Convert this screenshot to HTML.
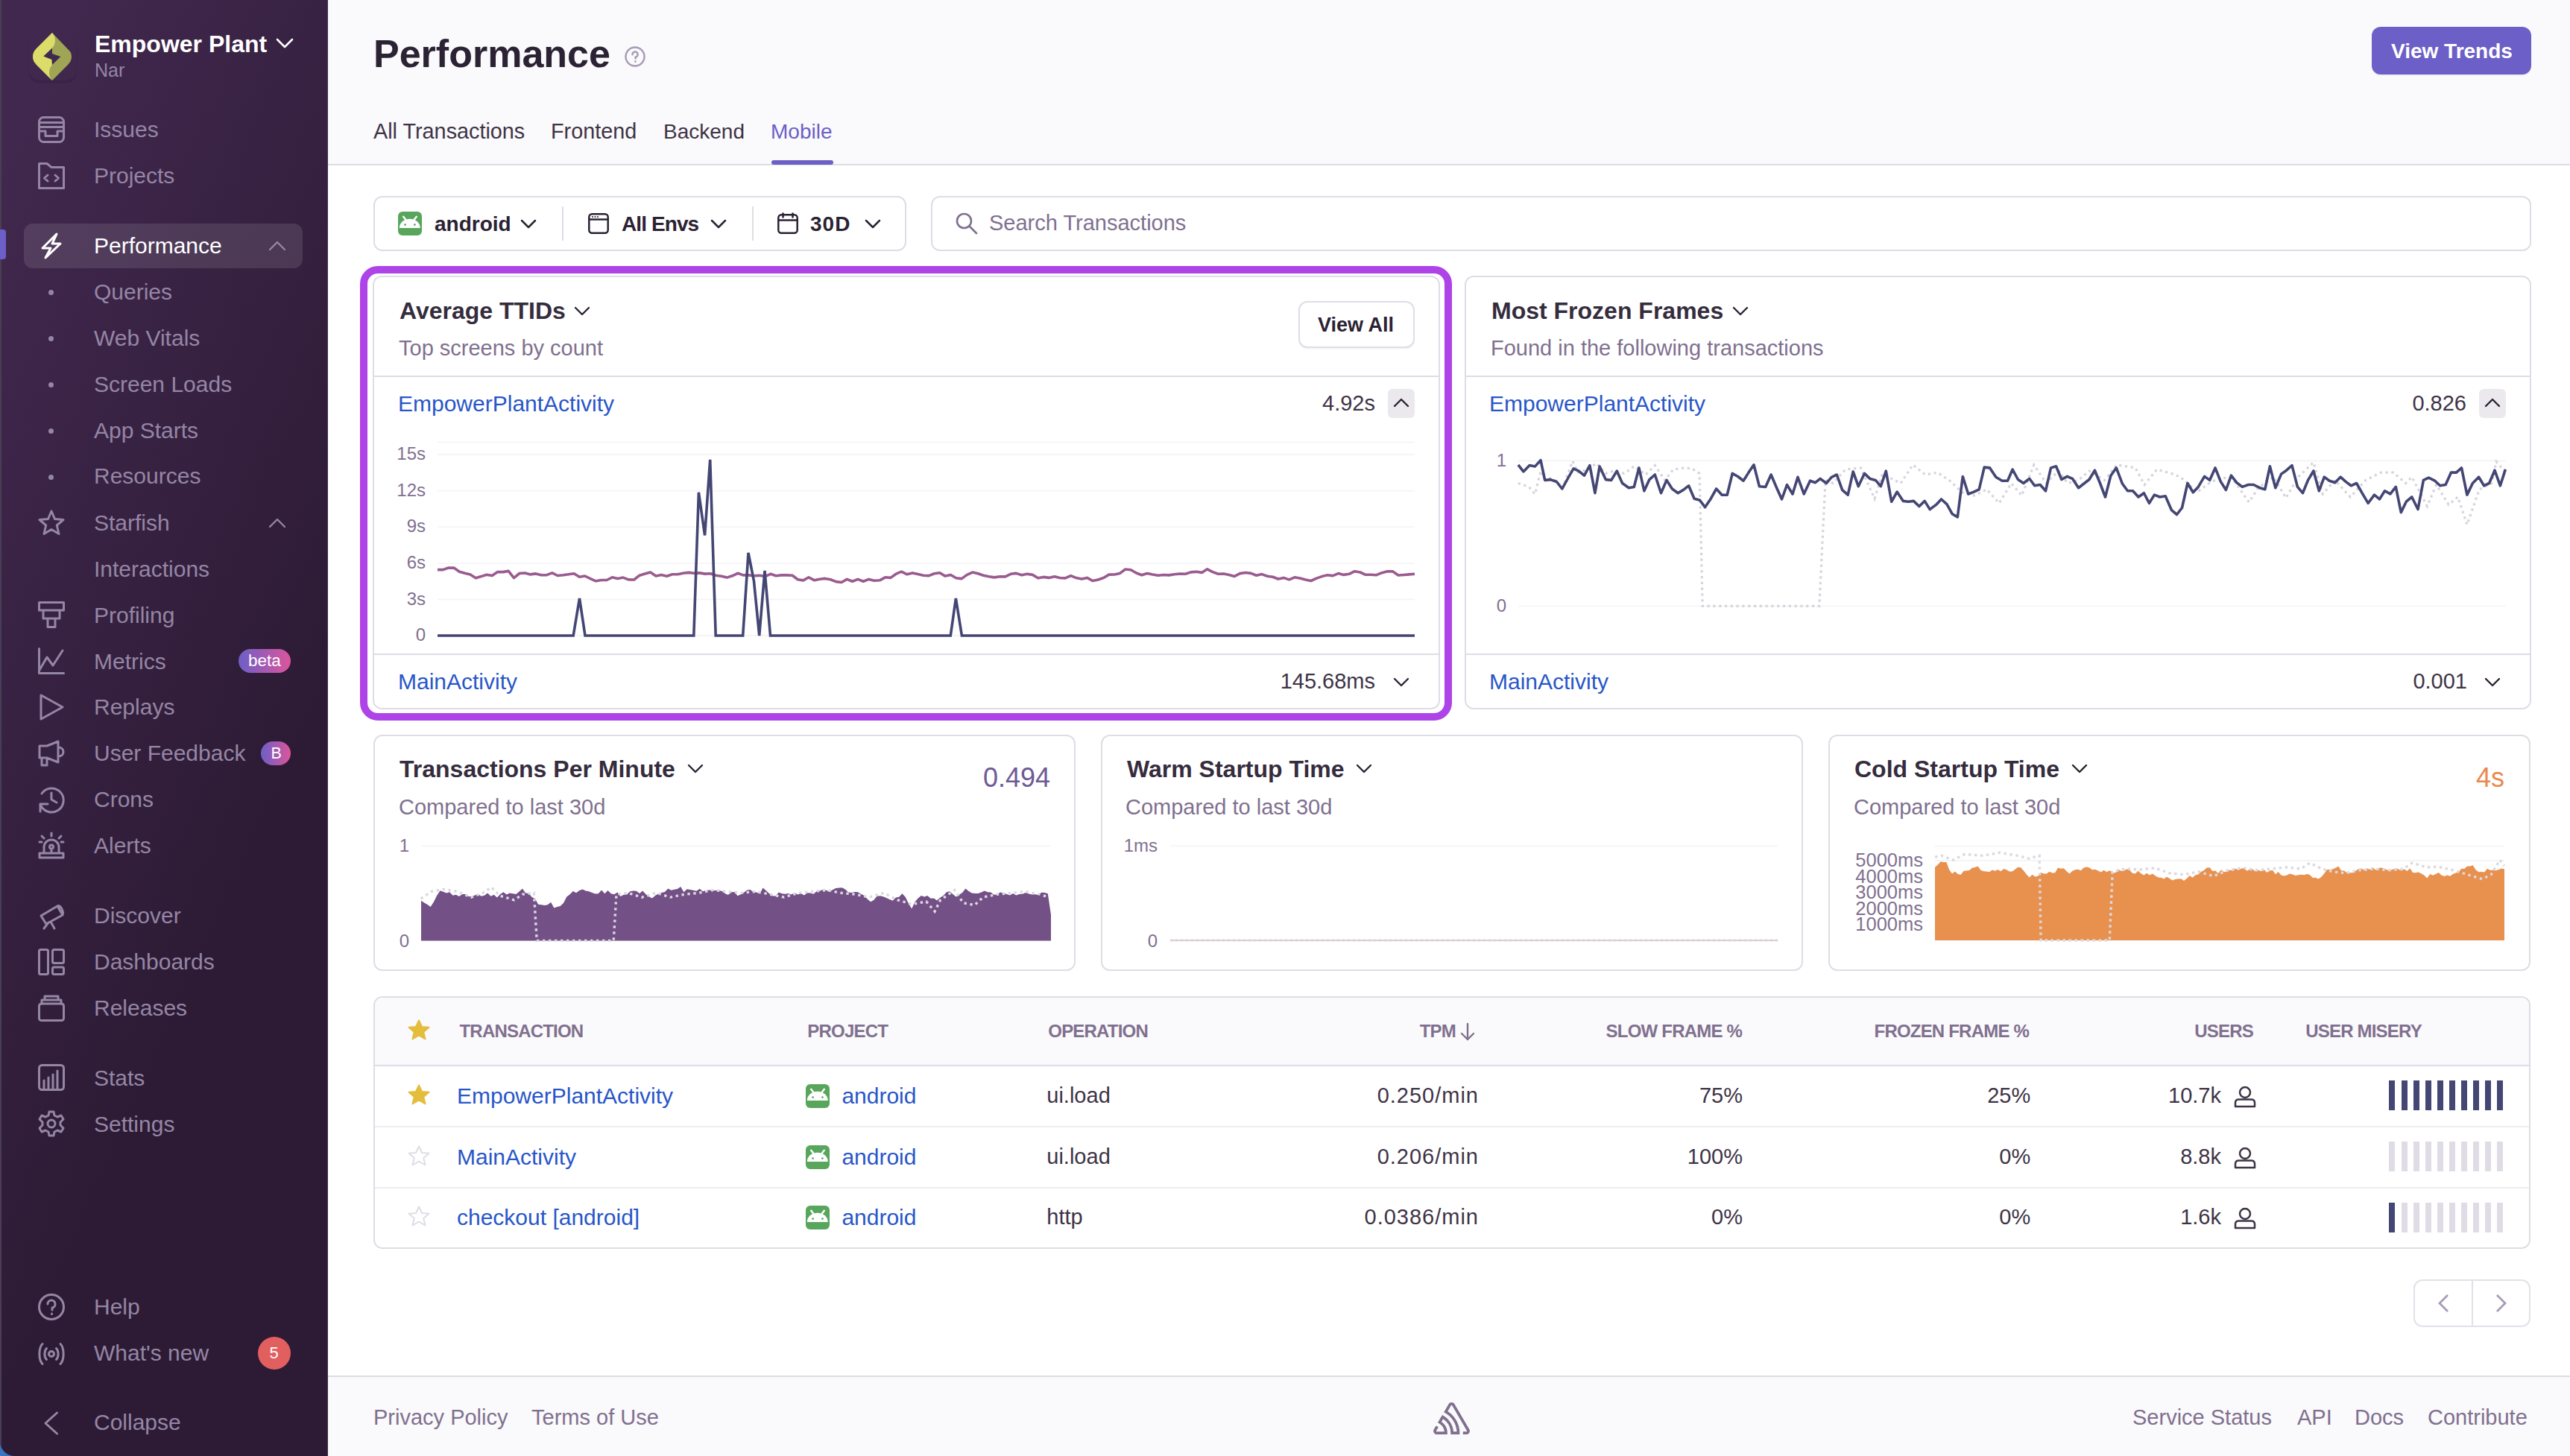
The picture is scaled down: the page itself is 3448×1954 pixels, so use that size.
<!DOCTYPE html>
<html><head><meta charset="utf-8">
<style>
*{box-sizing:border-box;margin:0;padding:0}
html,body{width:3448px;height:1954px;overflow:hidden;background:#fff;font-family:"Liberation Sans",sans-serif}
.a{position:absolute}
.t{position:absolute;line-height:1;white-space:nowrap}
#sb{position:absolute;left:0;top:0;width:440px;height:1954px;background:linear-gradient(294.17deg,#2d1b35 35.57%,#41284e 92.42%);overflow:hidden;border-bottom-left-radius:20px}
.nv{position:absolute;left:126px;font-size:30px;color:#9586a5;line-height:1;white-space:nowrap}
.ic{position:absolute;left:51px;width:36px;height:36px;overflow:visible}
.ic *{fill:none;stroke:#9586a5;stroke-width:3;stroke-linecap:round;stroke-linejoin:round}
.dot{position:absolute;left:65px;width:7px;height:7px;border-radius:50%;background:#9586a5}
@media (max-width:2000px){html{zoom:0.5}}
</style>
<style>
.card{border:2px solid #e0dce5;border-radius:12px;background:#fff}
.ttl{font-size:32px;font-weight:bold;color:#352c3d}
.sub{font-size:29px;color:#80708f}
.lnk{font-size:30px;color:#2856c9}
.tx{font-size:29px;color:#3e3446}
.yl{position:absolute;line-height:1;white-space:nowrap;font-size:24px;color:#80708f}
.th{position:absolute;line-height:1;white-space:nowrap;font-size:24px;font-weight:bold;color:#80708f;letter-spacing:-0.8px}
</style>
</head>
<body>
<div style="position:absolute;left:0;top:1924px;width:30px;height:30px;background:linear-gradient(45deg,#3f78c2,#1f4f96)"></div>
<div id="sb"><div class="a" style="left:438.5px;top:0;width:1.5px;height:1954px;background:#46375a;opacity:0.8"></div><div class="a" style="left:0;top:0;width:1.5px;height:1954px;background:#4a3d56"></div>
  <!-- org -->
  <div class="a" style="left:39px;top:42px;width:63px;height:66px;border-radius:14px;box-shadow:0 3px 2px rgba(20,10,30,0.15)"></div>
  <svg class="a" style="left:40px;top:40px" width="60" height="72" viewBox="0 0 60 72">
    <path d="M30 4 L9 25 Q4 30 4 36 Q4 42 9 47 L30 68 L51 47 Q56 42 56 36 Q56 30 51 26 Z" fill="#9fa555"/>
    <path d="M30 4 C35 9 35.5 19 30 24.6 L18.4 35.4 L29.2 39.8 L30 46.9 C25 52 24.5 62 30 68 L9 47 Q4 42 4 36 Q4 30 9 25 Z" fill="#dbdc69"/>
    <path d="M30 24.6 L18.4 35.4 L29.6 40 L30 46.9 L41.3 36 L30 32 Z" fill="#40294f"/>
  </svg>
  <div class="t" style="left:127px;top:43px;font-size:32px;font-weight:bold;color:#fff">Empower Plant</div>
  <svg class="a" style="left:370px;top:50px" width="24" height="16" viewBox="0 0 24 16"><path d="M2 3 L12 13 L22 3" fill="none" stroke="#fff" stroke-width="2.6" stroke-linecap="round" stroke-linejoin="round"/></svg>
  <div class="t" style="left:127px;top:82px;font-size:25px;color:#9586a5">Nar</div>

  <!-- Issues -->
  <svg class="ic" style="top:156px" viewBox="0 0 36 36"><rect x="1.5" y="1.5" width="33" height="33" rx="6"/><path d="M1.5 8.5H34.5M1.5 14.5H34.5M1.5 20H10V26.5H26V20H34.5"/></svg>
  <div class="nv" style="top:159px">Issues</div>
  <!-- Projects -->
  <svg class="ic" style="top:218px" viewBox="0 0 36 36"><path d="M1.5 1.5H12L18 6.5H34.5V34.5H1.5Z"/><path d="M13 17L8.5 21L13 25M23 17L27.5 21L23 25"/></svg>
  <div class="nv" style="top:221px">Projects</div>

  <!-- Performance active -->
  <div class="a" style="left:32px;top:300px;width:374px;height:60px;border-radius:12px;background:rgba(255,255,255,0.11)"></div>
  <div class="a" style="left:0;top:308px;width:8px;height:40px;border-radius:0 4px 4px 0;background:#6c5fc7"></div>
  <svg class="ic" style="top:312px" viewBox="0 0 36 36"><path style="stroke:#fff" d="M25 2L6 21H17L10 34L30 15H19Z"/></svg>
  <div class="nv" style="top:315px;color:#fff">Performance</div>
  <svg class="a" style="left:360px;top:322px" width="24" height="16" viewBox="0 0 24 16"><path d="M2 13L12 3L22 13" fill="none" stroke="#9586a5" stroke-width="2.4" stroke-linecap="round" stroke-linejoin="round"/></svg>

  <div class="dot" style="top:389px"></div><div class="nv" style="top:377px">Queries</div>
  <div class="dot" style="top:451px"></div><div class="nv" style="top:439px">Web Vitals</div>
  <div class="dot" style="top:513px"></div><div class="nv" style="top:501px">Screen Loads</div>
  <div class="dot" style="top:575px"></div><div class="nv" style="top:563px">App Starts</div>
  <div class="dot" style="top:637px"></div><div class="nv" style="top:624px">Resources</div>

  <!-- Starfish -->
  <svg class="ic" style="top:684px" viewBox="0 0 36 36"><path d="M18 2L22.5 12.5L34 13.5L25.3 21L28 32.5L18 26.5L8 32.5L10.7 21L2 13.5L13.5 12.5Z"/></svg>
  <div class="nv" style="top:687px">Starfish</div>
  <svg class="a" style="left:360px;top:694px" width="24" height="16" viewBox="0 0 24 16"><path d="M2 13L12 3L22 13" fill="none" stroke="#9586a5" stroke-width="2.4" stroke-linecap="round" stroke-linejoin="round"/></svg>
  <div class="nv" style="top:749px">Interactions</div>

  <!-- Profiling -->
  <svg class="ic" style="top:807px" viewBox="0 0 36 36"><path d="M1.5 1.5H34.5V12H1.5Z M7 12V23H29V12 M13 23V34.5H23V23"/></svg>
  <div class="nv" style="top:811px">Profiling</div>
  <!-- Metrics -->
  <svg class="ic" style="top:869px" viewBox="0 0 36 36"><path d="M1.5 1.5V34.5H34.5 M1.5 31L12 13L20 24L33 4"/></svg>
  <div class="nv" style="top:873px">Metrics</div>
  <div class="a" style="left:320px;top:871px;width:70px;height:32px;border-radius:16px;background:linear-gradient(90deg,#6c5fc7,#dc559c)"></div>
  <div class="t" style="left:333px;top:876px;font-size:22.5px;color:#fff">beta</div>
  <!-- Replays -->
  <svg class="ic" style="top:931px" viewBox="0 0 36 36"><path d="M4 2L33 18L4 34Z"/></svg>
  <div class="nv" style="top:934px">Replays</div>
  <!-- User Feedback -->
  <svg class="ic" style="top:993px" viewBox="0 0 36 36"><path d="M2 8H12L27 2V30L12 24H2Z M27 10C32 10 34 13 34 16C34 19 32 22 27 22 M5 24V34H12V24"/></svg>
  <div class="nv" style="top:996px">User Feedback</div>
  <div class="a" style="left:350px;top:995px;width:40px;height:32px;border-radius:16px;background:linear-gradient(90deg,#6c5fc7,#dc559c)"></div>
  <div class="t" style="left:363.5px;top:1000.5px;font-size:21.5px;color:#fff">B</div>
  <!-- Crons -->
  <svg class="ic" style="top:1055px" viewBox="0 0 36 36"><path d="M5 10A16 16 0 1 1 3 24 M3 34V24H13 M18 9V18L25 22"/></svg>
  <div class="nv" style="top:1058px">Crons</div>
  <!-- Alerts -->
  <svg class="ic" style="top:1117px" viewBox="0 0 36 36"><path d="M8 28V20A10 10 0 0 1 28 20V28 M2 28H34V34H2Z M18 1V5 M5 5L8 8 M31 5L28 8 M2 13H5 M31 13H34 M18 17A2.5 2.5 0 1 1 18 22 A2.5 2.5 0 1 1 18 17 M18 22V26"/></svg>
  <div class="nv" style="top:1120px">Alerts</div>

  <!-- Discover -->
  <svg class="ic" style="top:1211px" viewBox="0 0 36 36"><path d="M4 18L26 5L33 17L11 29Z M26 5C30 3 35 12 33 17 M14 27L8 35 M17 26L22 35"/></svg>
  <div class="nv" style="top:1214px">Discover</div>
  <!-- Dashboards -->
  <svg class="ic" style="top:1273px" viewBox="0 0 36 36"><rect x="1.5" y="1.5" width="12" height="33" rx="2"/><rect x="19.5" y="1.5" width="15" height="18" rx="2"/><rect x="19.5" y="25" width="15" height="9.5" rx="2"/></svg>
  <div class="nv" style="top:1276px">Dashboards</div>
  <!-- Releases -->
  <svg class="ic" style="top:1335px" viewBox="0 0 36 36"><rect x="1.5" y="12" width="33" height="22.5" rx="3"/><path d="M5 12V7H31V12 M9 7V2H27V7"/></svg>
  <div class="nv" style="top:1338px">Releases</div>

  <!-- Stats -->
  <svg class="ic" style="top:1428px" viewBox="0 0 36 36"><rect x="1.5" y="1.5" width="33" height="33" rx="4"/><path d="M8 34V22 M14 34V18 M20 34V14 M26 34V9"/></svg>
  <div class="nv" style="top:1432px">Stats</div>
  <!-- Settings -->
  <svg class="ic" style="top:1490px" viewBox="0 0 36 36"><path d="M15 2H21L22 7L26 9L31 7L34 12L30 16V20L34 24L31 29L26 27L22 29L21 34H15L14 29L10 27L5 29L2 24L6 20V16L2 12L5 7L10 9L14 7Z"/><circle cx="18" cy="18" r="5"/></svg>
  <div class="nv" style="top:1494px">Settings</div>

  <!-- Help -->
  <svg class="ic" style="top:1736px" viewBox="0 0 36 36"><circle cx="18" cy="18" r="16.5"/><path d="M13 14A5 5 0 1 1 19 19V22 M18.5 27V27.5"/></svg>
  <div class="nv" style="top:1739px">Help</div>
  <!-- What's new -->
  <svg class="ic" style="top:1799px" viewBox="0 0 36 36"><circle cx="18" cy="18" r="3.5"/><path d="M11.5 10.5C8 14 8 22 11.5 25.5 M24.5 10.5C28 14 28 22 24.5 25.5 M6 4.5C0.5 10 0.5 26 6 31.5 M30 4.5C35.5 10 35.5 26 30 31.5"/></svg>
  <div class="nv" style="top:1801px">What's new</div>
  <div class="a" style="left:346px;top:1794px;width:44px;height:44px;border-radius:50%;background:#e1605f"></div>
  <div class="t" style="left:361.5px;top:1804.5px;font-size:22px;color:#fff">5</div>
  <!-- Collapse -->
  <svg class="ic" style="top:1892px" viewBox="0 0 36 36"><path d="M25.5 4L10 18L25.5 32"/></svg>
  <div class="nv" style="top:1894px">Collapse</div>
</div>


<!-- HEADER -->
<div class="a" style="left:440px;top:0;width:3008px;height:222px;background:#faf9fb;border-bottom:2px solid #e0dce5"></div>
<div class="t" style="left:501px;top:46px;font-size:52px;font-weight:bold;color:#2b2233">Performance</div>
<svg class="a" style="left:838px;top:62px" width="28" height="28" viewBox="0 0 28 28"><circle cx="14" cy="14" r="12.5" fill="none" stroke="#a89bb6" stroke-width="2.4"/><path d="M10.5 11.2A3.6 3.6 0 1 1 14.6 14.6V16.6" fill="none" stroke="#a89bb6" stroke-width="2.4" stroke-linecap="round"/><circle cx="14.4" cy="20.6" r="1.4" fill="#a89bb6"/></svg>
<div class="a" style="left:3182px;top:36px;width:214px;height:64px;border-radius:12px;background:#6c5fc7;box-shadow:0 2px 0 rgba(0,0,0,0.04)"></div>
<div class="t" style="left:3208px;top:55px;font-size:28px;font-weight:bold;color:#fff">View Trends</div>

<div class="t" style="left:501px;top:162px;font-size:28.8px;color:#3e3446">All Transactions</div>
<div class="t" style="left:739px;top:162px;font-size:28.8px;color:#3e3446">Frontend</div>
<div class="t" style="left:890px;top:163px;font-size:28px;color:#3e3446">Backend</div>
<div class="t" style="left:1034px;top:163px;font-size:28px;color:#6c5fc7">Mobile</div>
<div class="a" style="left:1035px;top:215px;width:83px;height:6px;border-radius:3px;background:#6c5fc7"></div>

<!-- FILTER BAR -->
<div class="a" style="left:501px;top:263px;width:715px;height:74px;border:2px solid #e0dce5;border-radius:12px;background:#fff"></div>
<svg class="a" style="left:534px;top:284px" width="32" height="32" viewBox="0 0 32 32"><rect width="32" height="32" rx="6" fill="#58a65c"/><path d="M1.8 22 A14 12.2 0 0 1 29.8 22 Z" fill="#fff"/><path d="M7.2 6.8L11.2 12M24.8 6.8L20.8 12" stroke="#fff" stroke-width="2.4" stroke-linecap="round"/><circle cx="9.6" cy="17.6" r="1.4" fill="#58a65c"/><circle cx="22.4" cy="17.6" r="1.4" fill="#58a65c"/></svg>
<div class="t" style="left:583px;top:287px;font-size:28px;font-weight:bold;color:#2b2233">android</div>
<svg class="a" style="left:698px;top:293px" width="22" height="14" viewBox="0 0 22 14"><path d="M2 3L11 12L20 3" fill="none" stroke="#2b2233" stroke-width="2.5" stroke-linecap="round" stroke-linejoin="round"/></svg>
<div class="a" style="left:754px;top:277px;width:2px;height:46px;background:#e0dce5"></div>
<svg class="a" style="left:789px;top:286px" width="28" height="28" viewBox="0 0 28 28"><rect x="1.3" y="1.3" width="25.4" height="25.4" rx="4" fill="none" stroke="#2b2233" stroke-width="2.5"/><path d="M1.3 8.5H26.7" stroke="#2b2233" stroke-width="2.5"/><circle cx="6" cy="5" r="1.1" fill="#2b2233"/><circle cx="9.5" cy="5" r="1.1" fill="#2b2233"/><circle cx="13" cy="5" r="1.1" fill="#2b2233"/></svg>
<div class="t" style="left:834px;top:287px;font-size:28px;font-weight:bold;color:#2b2233;letter-spacing:-0.9px">All Envs</div>
<svg class="a" style="left:953px;top:293px" width="22" height="14" viewBox="0 0 22 14"><path d="M2 3L11 12L20 3" fill="none" stroke="#2b2233" stroke-width="2.5" stroke-linecap="round" stroke-linejoin="round"/></svg>
<div class="a" style="left:1009px;top:277px;width:2px;height:46px;background:#e0dce5"></div>
<svg class="a" style="left:1043px;top:284px" width="28" height="30" viewBox="0 0 28 30"><rect x="1.3" y="4.3" width="25.4" height="24.4" rx="4" fill="none" stroke="#2b2233" stroke-width="2.5"/><path d="M1.3 11.5H26.7M7.5 2.5V7.5M20.5 2.5V7.5" stroke="#2b2233" stroke-width="2.5" stroke-linecap="round"/></svg>
<div class="t" style="left:1087px;top:287px;font-size:28px;font-weight:bold;color:#2b2233;letter-spacing:1px">30D</div>
<svg class="a" style="left:1160px;top:293px" width="22" height="14" viewBox="0 0 22 14"><path d="M2 3L11 12L20 3" fill="none" stroke="#2b2233" stroke-width="2.5" stroke-linecap="round" stroke-linejoin="round"/></svg>

<!-- SEARCH -->
<div class="a" style="left:1249px;top:263px;width:2147px;height:74px;border:2px solid #e0dce5;border-radius:12px;background:#fff"></div>
<svg class="a" style="left:1282px;top:285px" width="30" height="30" viewBox="0 0 30 30"><circle cx="11.5" cy="11.5" r="9.5" fill="none" stroke="#80708f" stroke-width="2.6"/><path d="M18.5 18.5L28 28" stroke="#80708f" stroke-width="2.6" stroke-linecap="round"/></svg>
<div class="t" style="left:1327px;top:285px;font-size:29px;color:#80708f">Search Transactions</div>

<!-- HIGHLIGHT -->
<div class="a" style="left:483px;top:357px;width:1465px;height:610px;border:10px solid #ae43e8;border-radius:24px"></div>

<!-- TTID CARD -->
<div class="a card" style="left:500px;top:370px;width:1432px;height:582px"></div>
<div class="t ttl" style="left:536px;top:401px">Average TTIDs</div>
<svg class="a" style="left:770px;top:410px" width="22" height="14" viewBox="0 0 22 14"><path d="M2 3L11 12L20 3" fill="none" stroke="#2b2233" stroke-width="2.4" stroke-linecap="round" stroke-linejoin="round"/></svg>
<div class="t sub" style="left:535px;top:453px">Top screens by count</div>
<div class="a" style="left:1742px;top:404px;width:156px;height:63px;border:2px solid #e0dce5;border-radius:12px;background:#fff;box-shadow:0 2px 0 rgba(43,34,51,0.04)"></div>
<div class="t" style="left:1768px;top:423px;font-size:27px;font-weight:bold;color:#2b2233">View All</div>
<div class="a" style="left:500px;top:504px;width:1432px;height:2px;background:#e0dce5"></div>
<div class="t lnk" style="left:534px;top:527px">EmpowerPlantActivity</div>
<div class="t tx" style="right:1603px;top:527px">4.92s</div>
<div class="a" style="left:1862px;top:522px;width:36px;height:39px;border-radius:6px;background:#ebe9ee"></div>
<svg class="a" style="left:1869px;top:534px" width="22" height="14" viewBox="0 0 22 14"><path d="M2 11L11 2L20 11" fill="none" stroke="#2b2233" stroke-width="2.4" stroke-linecap="round" stroke-linejoin="round"/></svg>
<div class="yl" style="right:2877px;top:840.2px">0</div>
<div class="yl" style="right:2877px;top:791.6px">3s</div>
<div class="yl" style="right:2877px;top:743.0px">6s</div>
<div class="yl" style="right:2877px;top:694.4px">9s</div>
<div class="yl" style="right:2877px;top:645.8px">12s</div>
<div class="yl" style="right:2877px;top:597.2px">15s</div>
<svg class="a" style="left:560px;top:580px" width="1360" height="290" viewBox="560 580 1360 290"><path d="M587.0 593.4 H1898.0" stroke="#f5f4f7" stroke-width="1.8" fill="none"/><path d="M587.0 853.0 H1898.0" stroke="#f5f4f7" stroke-width="1.8" fill="none"/><path d="M587.0 804.4 H1898.0" stroke="#f5f4f7" stroke-width="1.8" fill="none"/><path d="M587.0 755.8 H1898.0" stroke="#f5f4f7" stroke-width="1.8" fill="none"/><path d="M587.0 707.2 H1898.0" stroke="#f5f4f7" stroke-width="1.8" fill="none"/><path d="M587.0 658.6 H1898.0" stroke="#f5f4f7" stroke-width="1.8" fill="none"/><path d="M587.0 610.0 H1898.0" stroke="#f5f4f7" stroke-width="1.8" fill="none"/><path d="M587.0 764.6 L594.3 764.6 L601.6 762.0 L609.0 762.1 L616.3 767.2 L623.6 769.3 L630.9 770.9 L638.3 775.7 L645.6 773.6 L652.9 771.2 L660.2 772.6 L667.6 767.6 L674.9 767.6 L682.2 766.4 L689.5 775.6 L696.9 769.5 L704.2 769.0 L711.5 770.9 L718.8 769.9 L726.2 771.7 L733.5 771.7 L740.8 768.8 L748.1 772.5 L755.5 771.8 L762.8 770.7 L770.1 769.8 L777.4 774.3 L784.7 773.0 L792.1 776.6 L799.4 779.8 L806.7 778.5 L814.0 778.5 L821.4 774.8 L828.7 776.5 L836.0 775.1 L843.3 777.9 L850.7 778.0 L858.0 772.2 L865.3 770.0 L872.6 768.0 L880.0 772.9 L887.3 771.4 L894.6 773.2 L901.9 770.7 L909.3 770.8 L916.6 769.3 L923.9 768.4 L931.2 769.2 L938.6 768.9 L945.9 770.1 L953.2 769.7 L960.5 772.2 L967.8 773.2 L975.2 775.1 L982.5 772.8 L989.8 769.3 L997.1 771.9 L1004.5 771.9 L1011.8 772.8 L1019.1 772.3 L1026.4 773.6 L1033.8 770.3 L1041.1 772.7 L1048.4 771.9 L1055.7 771.9 L1063.1 772.2 L1070.4 777.7 L1077.7 778.9 L1085.0 774.8 L1092.4 778.7 L1099.7 777.2 L1107.0 776.4 L1114.3 777.7 L1121.7 780.6 L1129.0 781.5 L1136.3 777.4 L1143.6 780.2 L1150.9 777.4 L1158.3 780.2 L1165.6 777.4 L1172.9 779.2 L1180.2 778.8 L1187.6 774.8 L1194.9 775.4 L1202.2 770.2 L1209.5 767.2 L1216.9 770.8 L1224.2 768.9 L1231.5 770.6 L1238.8 772.2 L1246.2 772.6 L1253.5 769.8 L1260.8 768.7 L1268.1 773.1 L1275.5 771.5 L1282.8 775.8 L1290.1 776.6 L1297.4 771.4 L1304.8 768.1 L1312.1 769.7 L1319.4 772.2 L1326.7 773.7 L1334.1 774.9 L1341.4 773.8 L1348.7 773.9 L1356.0 770.3 L1363.3 769.4 L1370.7 771.7 L1378.0 770.2 L1385.3 771.4 L1392.6 775.7 L1400.0 774.4 L1407.3 775.4 L1414.6 773.7 L1421.9 775.5 L1429.3 775.9 L1436.6 772.7 L1443.9 775.6 L1451.2 777.0 L1458.6 775.4 L1465.9 779.5 L1473.2 778.0 L1480.5 775.5 L1487.9 771.1 L1495.2 771.0 L1502.5 769.4 L1509.8 764.0 L1517.2 764.7 L1524.5 769.0 L1531.8 771.8 L1539.1 769.5 L1546.4 771.0 L1553.8 772.3 L1561.1 771.5 L1568.4 771.9 L1575.7 770.7 L1583.1 770.0 L1590.4 770.3 L1597.7 767.9 L1605.0 767.3 L1612.4 768.4 L1619.7 763.8 L1627.0 767.6 L1634.3 770.3 L1641.7 770.0 L1649.0 771.4 L1656.3 773.4 L1663.6 769.6 L1671.0 768.5 L1678.3 769.4 L1685.6 772.2 L1692.9 770.6 L1700.3 773.2 L1707.6 774.2 L1714.9 777.0 L1722.2 775.4 L1729.5 777.9 L1736.9 774.8 L1744.2 776.0 L1751.5 778.0 L1758.8 779.5 L1766.2 776.1 L1773.5 773.6 L1780.8 771.8 L1788.1 772.6 L1795.5 769.6 L1802.8 771.4 L1810.1 770.3 L1817.4 766.7 L1824.8 768.0 L1832.1 771.3 L1839.4 771.2 L1846.7 771.7 L1854.1 768.7 L1861.4 766.8 L1868.7 766.9 L1876.0 772.0 L1883.4 771.5 L1890.7 770.9 L1898.0 770.3" stroke="#9a5b8f" stroke-width="3.6" fill="none" stroke-linejoin="round"/><path d="M587.0 853.0 L769.2 853.0 L777.5 803.0 L785.0 853.0 L930.8 853.0 L937.4 660.7 L945.6 718.4 L952.7 616.8 L960.2 853.0 L996.7 853.0 L1004.0 741.8 L1011.5 780.0 L1018.7 853.0 L1026.0 766.0 L1033.5 853.0 L1275.3 853.0 L1282.4 803.0 L1290.4 853.0 L1898.0 853.0" stroke="#444674" stroke-width="3.6" fill="none" stroke-linejoin="miter"/></svg>
<div class="a" style="left:500px;top:877px;width:1432px;height:2px;background:#e0dce5"></div>
<div class="t lnk" style="left:534px;top:900px">MainActivity</div>
<div class="t tx" style="right:1603px;top:900px">145.68ms</div>
<svg class="a" style="left:1869px;top:908px" width="22" height="14" viewBox="0 0 22 14"><path d="M2 3L11 12L20 3" fill="none" stroke="#2b2233" stroke-width="2.4" stroke-linecap="round" stroke-linejoin="round"/></svg>

<!-- FROZEN CARD -->
<div class="a card" style="left:1965px;top:370px;width:1431px;height:582px"></div>
<div class="t ttl" style="left:2001px;top:401px">Most Frozen Frames</div>
<svg class="a" style="left:2324px;top:410px" width="22" height="14" viewBox="0 0 22 14"><path d="M2 3L11 12L20 3" fill="none" stroke="#2b2233" stroke-width="2.4" stroke-linecap="round" stroke-linejoin="round"/></svg>
<div class="t sub" style="left:2000px;top:453px">Found in the following transactions</div>
<div class="a" style="left:1965px;top:504px;width:1431px;height:2px;background:#e0dce5"></div>
<div class="t lnk" style="left:1998px;top:527px">EmpowerPlantActivity</div>
<div class="t tx" style="right:139px;top:527px">0.826</div>
<div class="a" style="left:3326px;top:522px;width:36px;height:39px;border-radius:6px;background:#ebe9ee"></div>
<svg class="a" style="left:3333px;top:534px" width="22" height="14" viewBox="0 0 22 14"><path d="M2 11L11 2L20 11" fill="none" stroke="#2b2233" stroke-width="2.4" stroke-linecap="round" stroke-linejoin="round"/></svg>
<div class="yl" style="right:1427px;top:605.7px">1</div>
<div class="yl" style="right:1427px;top:800.6px">0</div>
<svg class="a" style="left:2020px;top:590px" width="1360" height="240" viewBox="2020 590 1360 240"><path d="M2037.0 618.5 H3362.0" stroke="#f5f4f7" stroke-width="1.8" fill="none"/><path d="M2037.0 813.4 H3362.0" stroke="#f5f4f7" stroke-width="1.8" fill="none"/><path d="M2036.9 648.5 L2051.3 653.5 L2059.5 663.0 L2067.0 632.1 L2072.7 643.6 L2082.2 641.1 L2096.6 654.7 L2109.8 618.9 L2117.2 634.1 L2129.6 630.0 L2142.0 621.7 L2154.3 635.4 L2164.6 632.1 L2179.1 635.4 L2192.3 625.9 L2207.9 637.0 L2220.3 624.6 L2233.5 644.4 L2245.0 630.0 L2259.5 627.9 L2269.8 628.8 L2280.1 635.4 L2284.2 813.4 L2440.8 813.4 L2449.1 644.4 L2459.4 648.5 L2475.9 630.0 L2496.5 627.9 L2515.0 669.2 L2525.3 636.2 L2550.1 648.5 L2566.5 623.8 L2583.0 637.0 L2599.5 634.1 L2616.0 645.2 L2632.5 660.9 L2649.0 665.0 L2665.5 656.8 L2682.0 675.3 L2698.5 648.5 L2712.4 665.0 L2728.8 623.8 L2745.3 648.5 L2761.8 632.0 L2774.2 648.5 L2788.6 644.4 L2803.0 632.0 L2823.6 644.4 L2840.1 623.8 L2864.8 627.9 L2877.2 650.5 L2893.7 629.9 L2918.4 636.9 L2930.8 644.4 L2947.3 660.8 L2963.8 648.5 L2980.2 640.2 L2996.7 644.4 L3017.3 674.0 L3029.7 654.7 L3050.3 640.2 L3066.8 668.3 L3083.3 640.2 L3103.9 620.5 L3116.2 662.9 L3132.7 644.4 L3153.3 667.0 L3173.9 644.4 L3194.5 634.1 L3211.0 634.1 L3227.5 648.5 L3235.8 640.2 L3256.4 679.4 L3268.7 650.5 L3285.2 677.3 L3297.6 667.0 L3309.9 704.1 L3326.4 656.7 L3342.9 648.5 L3349.1 619.6 L3361.4 634.1" stroke="#d7d3dc" stroke-width="3.2" stroke-dasharray="3.2 4.6" fill="none"/><path d="M2036.9 623.8 L2043.9 632.9 L2052.1 624.6 L2059.5 625.9 L2067.0 617.6 L2072.7 644.4 L2080.1 643.6 L2088.4 646.5 L2095.8 656.0 L2104.9 639.5 L2111.1 628.8 L2118.1 632.1 L2125.5 638.2 L2132.9 624.6 L2139.9 661.7 L2146.1 625.9 L2154.3 643.6 L2161.8 644.4 L2169.2 632.1 L2176.6 648.5 L2185.3 654.7 L2192.3 653.5 L2198.9 627.9 L2205.9 658.8 L2212.9 643.6 L2220.3 637.0 L2228.5 661.7 L2236.0 644.4 L2243.4 656.0 L2251.2 661.7 L2258.2 657.6 L2265.6 651.8 L2273.1 669.2 L2280.5 671.2 L2287.5 680.7 L2295.3 669.2 L2302.7 656.0 L2310.2 664.2 L2317.2 664.2 L2324.2 635.4 L2331.6 639.5 L2339.0 645.2 L2346.0 634.1 L2353.0 623.8 L2360.4 652.7 L2368.7 653.5 L2376.1 637.0 L2383.1 653.5 L2390.5 670.0 L2397.5 650.6 L2405.0 663.0 L2412.0 640.3 L2420.2 663.0 L2428.5 645.2 L2435.5 647.7 L2442.1 642.4 L2450.3 648.5 L2457.3 640.3 L2464.3 637.0 L2471.7 657.6 L2479.2 664.2 L2486.2 632.9 L2493.2 652.7 L2501.4 635.4 L2508.8 642.4 L2516.3 644.4 L2523.3 652.7 L2530.3 632.1 L2537.7 673.3 L2545.1 660.1 L2553.4 672.4 L2560.4 673.3 L2567.4 672.4 L2574.8 679.5 L2582.2 672.4 L2589.2 683.6 L2597.5 677.4 L2604.5 670.0 L2611.9 676.6 L2619.3 689.8 L2626.3 693.9 L2633.3 639.5 L2640.7 663.0 L2648.2 660.1 L2655.2 656.8 L2662.2 627.1 L2669.6 627.9 L2677.8 640.3 L2686.1 645.2 L2693.5 645.2 L2700.1 630.0 L2707.4 643.5 L2714.8 648.5 L2722.7 642.3 L2729.7 651.8 L2737.1 650.5 L2744.5 658.8 L2751.5 627.9 L2758.5 625.8 L2765.9 643.5 L2773.4 639.4 L2780.4 642.3 L2788.6 654.7 L2795.6 649.3 L2803.0 643.5 L2810.4 631.2 L2817.5 648.5 L2824.5 667.0 L2831.9 638.2 L2839.3 627.9 L2847.5 649.3 L2854.5 658.8 L2861.5 658.8 L2869.0 667.0 L2876.4 661.7 L2883.4 675.3 L2890.4 664.1 L2897.8 667.0 L2905.2 665.8 L2913.5 684.7 L2920.5 690.5 L2927.5 681.5 L2934.9 648.5 L2942.3 660.8 L2949.3 653.4 L2957.6 639.4 L2964.6 644.4 L2972.0 627.9 L2979.4 646.4 L2986.4 657.5 L2993.4 638.2 L3000.8 647.7 L3008.3 653.4 L3016.5 650.5 L3023.5 650.5 L3031.8 654.7 L3038.8 656.7 L3045.4 625.8 L3052.8 654.7 L3060.6 636.1 L3067.6 631.2 L3075.0 624.6 L3082.4 653.4 L3089.4 661.7 L3096.5 644.4 L3103.9 632.0 L3111.3 658.8 L3118.3 640.2 L3125.3 645.2 L3132.7 647.7 L3140.1 640.2 L3147.1 646.4 L3154.2 651.8 L3161.6 648.5 L3169.8 662.9 L3177.2 675.3 L3185.5 664.1 L3192.5 669.9 L3199.5 658.8 L3206.9 662.9 L3214.3 653.4 L3221.3 687.6 L3228.3 673.2 L3235.8 667.0 L3244.0 683.5 L3251.4 644.4 L3258.4 641.1 L3266.7 645.2 L3273.7 651.8 L3281.1 650.5 L3288.5 634.1 L3295.5 634.1 L3302.5 627.9 L3309.9 664.1 L3317.4 648.5 L3325.6 640.2 L3332.6 651.8 L3339.6 648.5 L3347.0 631.2 L3354.4 651.8 L3361.4 629.9" stroke="#444674" stroke-width="3.6" fill="none" stroke-linejoin="round"/></svg>
<div class="a" style="left:1965px;top:877px;width:1431px;height:2px;background:#e0dce5"></div>
<div class="t lnk" style="left:1998px;top:900px">MainActivity</div>
<div class="t tx" style="right:138px;top:900px">0.001</div>
<svg class="a" style="left:3333px;top:908px" width="22" height="14" viewBox="0 0 22 14"><path d="M2 3L11 12L20 3" fill="none" stroke="#2b2233" stroke-width="2.4" stroke-linecap="round" stroke-linejoin="round"/></svg>

<!-- ROW 2 CARDS -->
<div class="a card" style="left:501px;top:986px;width:942px;height:317px"></div>
<div class="t ttl" style="left:536px;top:1016px">Transactions Per Minute</div>
<svg class="a" style="left:922px;top:1024px" width="22" height="14" viewBox="0 0 22 14"><path d="M2 3L11 12L20 3" fill="none" stroke="#2b2233" stroke-width="2.4" stroke-linecap="round" stroke-linejoin="round"/></svg>
<div class="t sub" style="left:535px;top:1069px">Compared to last 30d</div>
<div class="t" style="right:2039px;top:1026px;font-size:36px;color:#6e5a96;line-height:1">0.494</div>
<div class="yl" style="right:2899px;top:1122.7px">1</div>
<div class="yl" style="right:2899px;top:1250.7px">0</div>
<svg class="a" style="left:555px;top:1125px" width="865" height="147" viewBox="555 1125 865 147"><path d="M565.0 1135.4 H1410.0" stroke="#f5f4f7" stroke-width="1.8" fill="none"/><path d="M565.0 1262.4 L565.0 1208.7 L569.2 1211.5 L573.5 1214.0 L577.7 1217.0 L582.0 1210.3 L586.2 1201.7 L590.5 1195.3 L594.7 1196.8 L599.0 1198.4 L603.2 1197.3 L607.5 1201.7 L611.7 1200.8 L616.0 1202.9 L620.2 1200.1 L624.4 1199.9 L628.7 1203.1 L632.9 1203.3 L637.2 1201.5 L641.4 1199.8 L645.7 1202.8 L649.9 1201.8 L654.2 1198.6 L658.4 1202.7 L662.7 1200.8 L666.9 1204.6 L671.2 1200.0 L675.4 1197.3 L679.6 1200.6 L683.9 1198.4 L688.1 1199.3 L692.4 1200.1 L696.6 1196.4 L700.9 1192.5 L705.1 1198.4 L709.4 1199.1 L713.6 1204.0 L717.9 1205.9 L722.1 1213.8 L726.4 1214.2 L730.6 1215.1 L734.8 1214.2 L739.1 1210.7 L743.3 1218.6 L747.6 1216.9 L751.8 1216.1 L756.1 1211.8 L760.3 1203.4 L764.6 1200.2 L768.8 1196.1 L773.1 1198.2 L777.3 1195.1 L781.6 1193.6 L785.8 1195.4 L790.1 1196.3 L794.3 1198.0 L798.5 1199.5 L802.8 1199.2 L807.0 1194.5 L811.3 1199.2 L815.5 1195.0 L819.8 1199.2 L824.0 1200.3 L828.3 1197.6 L832.5 1202.9 L836.8 1200.8 L841.0 1200.4 L845.3 1196.2 L849.5 1195.6 L853.7 1195.8 L858.0 1199.1 L862.2 1195.4 L866.5 1200.3 L870.7 1203.3 L875.0 1205.5 L879.2 1201.8 L883.5 1199.5 L887.7 1198.1 L892.0 1197.0 L896.2 1192.6 L900.5 1194.7 L904.7 1193.8 L908.9 1193.0 L913.2 1189.9 L917.4 1197.2 L921.7 1193.2 L925.9 1194.0 L930.2 1194.8 L934.4 1195.8 L938.7 1192.7 L942.9 1196.3 L947.2 1195.1 L951.4 1194.6 L955.7 1195.3 L959.9 1195.1 L964.1 1195.1 L968.4 1195.8 L972.6 1199.0 L976.9 1200.9 L981.1 1197.2 L985.4 1197.0 L989.6 1202.2 L993.9 1200.3 L998.1 1197.8 L1002.4 1194.4 L1006.6 1194.0 L1010.9 1197.3 L1015.1 1197.6 L1019.3 1199.5 L1023.6 1191.6 L1027.8 1195.2 L1032.1 1199.3 L1036.3 1202.2 L1040.6 1202.5 L1044.8 1197.6 L1049.1 1199.3 L1053.3 1199.7 L1057.6 1199.0 L1061.8 1200.6 L1066.1 1198.0 L1070.3 1200.5 L1074.5 1198.8 L1078.8 1201.6 L1083.0 1198.3 L1087.3 1198.5 L1091.5 1199.8 L1095.8 1195.9 L1100.0 1195.4 L1104.3 1193.7 L1108.5 1194.7 L1112.8 1196.8 L1117.0 1194.2 L1121.3 1191.9 L1125.5 1191.6 L1129.7 1191.3 L1134.0 1193.5 L1138.2 1197.4 L1142.5 1198.0 L1146.7 1197.1 L1151.0 1197.2 L1155.2 1199.7 L1159.5 1202.0 L1163.7 1206.4 L1168.0 1210.2 L1172.2 1208.0 L1176.5 1202.8 L1180.7 1202.3 L1184.9 1203.3 L1189.2 1205.0 L1193.4 1207.0 L1197.7 1208.7 L1201.9 1204.4 L1206.2 1203.8 L1210.4 1199.3 L1214.7 1203.8 L1218.9 1212.6 L1223.2 1219.5 L1227.4 1210.6 L1231.7 1205.4 L1235.9 1202.1 L1240.2 1203.5 L1244.4 1202.0 L1248.6 1205.8 L1252.9 1205.4 L1257.1 1208.5 L1261.4 1204.4 L1265.6 1202.1 L1269.9 1197.2 L1274.1 1196.2 L1278.4 1199.9 L1282.6 1203.4 L1286.9 1200.7 L1291.1 1198.0 L1295.4 1192.4 L1299.6 1196.1 L1303.8 1198.4 L1308.1 1199.1 L1312.3 1199.1 L1316.6 1197.6 L1320.8 1195.4 L1325.1 1197.3 L1329.3 1197.4 L1333.6 1200.7 L1337.8 1200.5 L1342.1 1197.6 L1346.3 1198.4 L1350.6 1199.9 L1354.8 1201.4 L1359.0 1199.1 L1363.3 1201.5 L1367.5 1199.9 L1371.8 1199.8 L1376.0 1197.9 L1380.3 1199.4 L1384.5 1200.5 L1388.8 1200.3 L1393.0 1201.1 L1397.3 1197.7 L1401.5 1198.1 L1405.8 1199.2 L1410.0 1227.7 L1410.0 1262.4 Z" fill="#735086"/><path d="M564.7 1206.0 L579.1 1196.4 L594.4 1193.4 L613.5 1196.4 L632.5 1204.1 L647.8 1198.3 L659.2 1190.7 L670.7 1202.1 L689.7 1207.9 L701.2 1200.2 L716.4 1198.3 L720.2 1262.4 L823.2 1262.4 L827.0 1200.2 L842.3 1198.3 L861.3 1204.1 L880.4 1198.3 L899.5 1204.1 L918.5 1200.2 L937.6 1198.3 L956.7 1194.5 L975.7 1196.4 L994.8 1198.3 L1013.9 1196.4 L1032.9 1200.2 L1052.0 1204.1 L1071.1 1198.3 L1090.1 1196.4 L1109.2 1194.5 L1128.3 1198.3 L1147.3 1200.2 L1166.4 1204.1 L1185.5 1198.3 L1204.5 1207.9 L1223.6 1213.6 L1242.7 1209.8 L1254.1 1223.1 L1261.7 1207.9 L1280.8 1194.5 L1292.2 1211.7 L1307.5 1214.7 L1318.9 1204.1 L1338.0 1200.2 L1357.1 1198.3 L1376.1 1196.4 L1395.2 1200.2 L1406.6 1204.1" stroke="#dcd8e0" stroke-width="3.4" stroke-dasharray="3.4 4.6" fill="none"/></svg>

<div class="a card" style="left:1477px;top:986px;width:942px;height:317px"></div>
<div class="t ttl" style="left:1512px;top:1016px">Warm Startup Time</div>
<svg class="a" style="left:1819px;top:1024px" width="22" height="14" viewBox="0 0 22 14"><path d="M2 3L11 12L20 3" fill="none" stroke="#2b2233" stroke-width="2.4" stroke-linecap="round" stroke-linejoin="round"/></svg>
<div class="t sub" style="left:1510px;top:1069px">Compared to last 30d</div>
<div class="yl" style="right:1895px;top:1122.7px">1ms</div>
<div class="yl" style="right:1895px;top:1250.7px">0</div>
<svg class="a" style="left:1560px;top:1125px" width="840" height="150" viewBox="1560 1125 840 150"><path d="M1570.0 1135.4 H2385.0" stroke="#f5f4f7" stroke-width="1.8" fill="none"/><path d="M1570 1262 H2385" stroke="#e7c9cf" stroke-width="2" fill="none"/><path d="M1570 1262 H2385" stroke="#d7d3dc" stroke-width="3" stroke-dasharray="3 4" fill="none"/></svg>

<div class="a card" style="left:2453px;top:986px;width:942px;height:317px"></div>
<div class="t ttl" style="left:2488px;top:1016px">Cold Startup Time</div>
<svg class="a" style="left:2779px;top:1024px" width="22" height="14" viewBox="0 0 22 14"><path d="M2 3L11 12L20 3" fill="none" stroke="#2b2233" stroke-width="2.4" stroke-linecap="round" stroke-linejoin="round"/></svg>
<div class="t sub" style="left:2487px;top:1069px">Compared to last 30d</div>
<div class="t" style="right:88px;top:1026px;font-size:36px;color:#e9894e;line-height:1">4s</div>
<div class="yl" style="right:868px;top:1142.4px;font-size:25.5px">5000ms</div>
<div class="yl" style="right:868px;top:1163.9px;font-size:25.5px">4000ms</div>
<div class="yl" style="right:868px;top:1185.4px;font-size:25.5px">3000ms</div>
<div class="yl" style="right:868px;top:1206.9px;font-size:25.5px">2000ms</div>
<div class="yl" style="right:868px;top:1228.4px;font-size:25.5px">1000ms</div>
<svg class="a" style="left:2590px;top:1145px" width="780" height="20" viewBox="2590 1145 780 20"><path d="M2596.0 1155.0 H3360.0" stroke="#f5f4f7" stroke-width="1.8" fill="none"/></svg>
<svg class="a" style="left:2586px;top:1125px" width="784" height="146" viewBox="2586 1125 784 146"><path d="M2596.0 1135.7 H3360.0" stroke="#f5f4f7" stroke-width="1.8" fill="none"/><path d="M2596.0 1262.0 L2596.0 1163.8 L2599.8 1160.4 L2603.7 1156.2 L2607.5 1156.9 L2611.4 1157.1 L2615.2 1167.2 L2619.0 1172.6 L2622.9 1169.6 L2626.7 1173.0 L2630.6 1174.1 L2634.4 1169.0 L2638.2 1168.4 L2642.1 1167.9 L2645.9 1164.7 L2649.7 1164.1 L2653.6 1162.5 L2657.4 1167.7 L2661.3 1169.2 L2665.1 1169.6 L2668.9 1170.2 L2672.8 1167.6 L2676.6 1168.8 L2680.5 1167.1 L2684.3 1169.2 L2688.1 1166.1 L2692.0 1167.3 L2695.8 1169.4 L2699.7 1169.5 L2703.5 1166.7 L2707.3 1163.8 L2711.2 1164.2 L2715.0 1168.5 L2718.9 1173.5 L2722.7 1177.6 L2726.5 1173.8 L2730.4 1176.4 L2734.2 1175.7 L2738.1 1171.1 L2741.9 1172.4 L2745.7 1172.6 L2749.6 1169.8 L2753.4 1171.5 L2757.2 1171.3 L2761.1 1164.6 L2764.9 1165.8 L2768.8 1165.2 L2772.6 1169.3 L2776.4 1172.6 L2780.3 1168.9 L2784.1 1167.2 L2788.0 1166.8 L2791.8 1168.3 L2795.6 1164.6 L2799.5 1163.6 L2803.3 1164.4 L2807.2 1167.3 L2811.0 1166.7 L2814.8 1168.5 L2818.7 1170.5 L2822.5 1167.8 L2826.4 1170.2 L2830.2 1168.2 L2834.0 1170.2 L2837.9 1171.6 L2841.7 1166.7 L2845.5 1168.8 L2849.4 1168.7 L2853.2 1166.3 L2857.1 1167.6 L2860.9 1171.8 L2864.7 1172.4 L2868.6 1168.7 L2872.4 1172.3 L2876.3 1174.4 L2880.1 1171.8 L2883.9 1174.6 L2887.8 1172.6 L2891.6 1175.2 L2895.5 1177.5 L2899.3 1177.8 L2903.1 1179.5 L2907.0 1176.8 L2910.8 1178.9 L2914.7 1181.5 L2918.5 1180.1 L2922.3 1179.4 L2926.2 1179.2 L2930.0 1182.1 L2933.8 1178.9 L2937.7 1175.0 L2941.5 1177.8 L2945.4 1174.3 L2949.2 1173.6 L2953.0 1169.9 L2956.9 1168.1 L2960.7 1164.6 L2964.6 1164.2 L2968.4 1169.0 L2972.2 1168.4 L2976.1 1171.9 L2979.9 1167.3 L2983.8 1170.3 L2987.6 1169.7 L2991.4 1167.6 L2995.3 1168.3 L2999.1 1165.6 L3003.0 1167.7 L3006.8 1165.7 L3010.6 1164.8 L3014.5 1168.8 L3018.3 1166.4 L3022.2 1166.6 L3026.0 1169.4 L3029.8 1167.4 L3033.7 1169.2 L3037.5 1167.1 L3041.3 1170.9 L3045.2 1168.4 L3049.0 1167.8 L3052.9 1173.2 L3056.7 1170.0 L3060.5 1174.6 L3064.4 1175.6 L3068.2 1174.4 L3072.1 1172.4 L3075.9 1173.5 L3079.7 1174.9 L3083.6 1174.2 L3087.4 1173.8 L3091.3 1174.2 L3095.1 1173.1 L3098.9 1173.9 L3102.8 1178.0 L3106.6 1177.7 L3110.5 1179.4 L3114.3 1177.0 L3118.1 1172.5 L3122.0 1167.1 L3125.8 1167.1 L3129.6 1166.4 L3133.5 1164.7 L3137.3 1162.5 L3141.2 1168.5 L3145.0 1168.4 L3148.8 1171.6 L3152.7 1171.3 L3156.5 1171.2 L3160.4 1168.7 L3164.2 1166.1 L3168.0 1165.4 L3171.9 1167.4 L3175.7 1165.2 L3179.6 1167.1 L3183.4 1164.0 L3187.2 1167.5 L3191.1 1165.1 L3194.9 1164.4 L3198.8 1165.6 L3202.6 1167.4 L3206.4 1168.0 L3210.3 1166.8 L3214.1 1165.3 L3217.9 1166.5 L3221.8 1168.4 L3225.6 1166.3 L3229.5 1169.1 L3233.3 1165.3 L3237.1 1170.9 L3241.0 1171.2 L3244.8 1170.5 L3248.7 1172.6 L3252.5 1174.8 L3256.3 1178.4 L3260.2 1173.0 L3264.0 1174.8 L3267.9 1173.1 L3271.7 1170.9 L3275.5 1174.5 L3279.4 1176.1 L3283.2 1174.5 L3287.1 1175.8 L3290.9 1172.9 L3294.7 1171.4 L3298.6 1170.5 L3302.4 1165.8 L3306.3 1166.1 L3310.1 1162.4 L3313.9 1162.4 L3317.8 1161.3 L3321.6 1167.4 L3325.4 1170.2 L3329.3 1170.0 L3333.1 1170.5 L3337.0 1165.7 L3340.8 1167.8 L3344.6 1167.8 L3348.5 1168.3 L3352.3 1167.1 L3356.2 1165.6 L3360.0 1166.3 L3360.0 1262.0 Z" fill="#e8914f"/><path d="M2596.1 1150.2 L2604.7 1148.3 L2620.4 1154.1 L2636.1 1146.3 L2659.6 1148.3 L2683.2 1144.3 L2706.7 1148.3 L2722.4 1152.2 L2736.1 1148.3 L2738.1 1262.0 L2830.3 1262.0 L2834.2 1169.8 L2851.8 1165.9 L2871.4 1167.1 L2891.1 1164.7 L2910.7 1171.8 L2930.3 1173.8 L2949.9 1169.8 L2969.5 1175.7 L2989.1 1167.9 L3008.7 1164.7 L3028.3 1167.9 L3047.9 1165.9 L3067.5 1164.0 L3087.2 1165.9 L3098.9 1158.1 L3114.6 1165.9 L3130.3 1169.8 L3146.0 1171.8 L3165.6 1167.9 L3185.2 1165.9 L3204.8 1167.9 L3224.4 1165.9 L3236.2 1158.1 L3255.8 1164.0 L3271.5 1163.2 L3291.1 1167.9 L3310.7 1173.8 L3330.3 1179.6 L3342.1 1173.8 L3353.9 1154.1 L3359.8 1162.0" stroke="#dcd8e0" stroke-width="3.4" stroke-dasharray="3.4 4.6" fill="none"/></svg>

<!-- TABLE -->
<div class="a card" style="left:501px;top:1337px;width:2894px;height:339px;background:#fff"></div>
<div class="a" style="left:503px;top:1339px;width:2890px;height:91px;background:#faf9fb;border-radius:10px 10px 0 0"></div>
<div class="a" style="left:503px;top:1429px;width:2890px;height:2px;background:#e0dce5"></div>
<div class="a" style="left:503px;top:1510.5px;width:2890px;height:2px;background:#f0ecf3"></div>
<div class="a" style="left:503px;top:1592.5px;width:2890px;height:2px;background:#f0ecf3"></div>
<svg class="a" style="left:547px;top:1368px" width="30" height="28" viewBox="0 0 30 28"><path d="M15 1.5L19 10L28.5 10.8L21.3 17L23.5 26.5L15 21.5L6.5 26.5L8.7 17L1.5 10.8L11 10Z" fill="#e4bd3c" stroke="#e4bd3c" stroke-width="2" stroke-linejoin="round"/></svg>
<div class="th" style="left:616.5px;top:1372.4px">TRANSACTION</div>
<div class="th" style="left:1083.3px;top:1372.4px">PROJECT</div>
<div class="th" style="left:1406.3px;top:1372.4px">OPERATION</div>
<div class="th" style="right:1495.0px;top:1372.4px">TPM</div>
<svg class="a" style="left:1958px;top:1372px" width="22" height="26" viewBox="0 0 22 26"><path d="M11 2V23M3 15L11 23L19 15" fill="none" stroke="#80708f" stroke-width="2.4" stroke-linecap="round" stroke-linejoin="round"/></svg>
<div class="th" style="right:1111.0px;top:1372.4px">SLOW FRAME %</div>
<div class="th" style="right:726.0px;top:1372.4px">FROZEN FRAME %</div>
<div class="th" style="right:425.0px;top:1372.4px">USERS</div>
<div class="th" style="left:3093.2px;top:1372.4px">USER MISERY</div>
<svg class="a" style="left:547px;top:1455px" width="30" height="28" viewBox="0 0 30 28"><path d="M15 1.5L19 10L28.5 10.8L21.3 17L23.5 26.5L15 21.5L6.5 26.5L8.7 17L1.5 10.8L11 10Z" fill="#e4bd3c" stroke="#e4bd3c" stroke-width="2" stroke-linejoin="round"/></svg>
<div class="t lnk" style="left:613.0px;top:1455.7px">EmpowerPlantActivity</div>
<svg class="a" style="left:1081px;top:1455px" width="32" height="32" viewBox="0 0 32 32"><rect width="32" height="32" rx="6" fill="#58a65c"/><path d="M1.8 22 A14 12.2 0 0 1 29.8 22 Z" fill="#fff"/><path d="M7.2 6.8L11.2 12M24.8 6.8L20.8 12" stroke="#fff" stroke-width="2.4" stroke-linecap="round"/><circle cx="9.6" cy="17.6" r="1.4" fill="#58a65c"/><circle cx="22.4" cy="17.6" r="1.4" fill="#58a65c"/></svg>
<div class="t lnk" style="left:1129.4px;top:1455.7px">android</div>
<div class="t tx" style="left:1404.3px;top:1455.7px">ui.load</div>
<div class="t tx" style="right:1465.0px;top:1455.7px"><span style="letter-spacing:1px">0.250/mi</span>n</div>
<div class="t tx" style="right:1110.0px;top:1455.7px">75%</div>
<div class="t tx" style="right:723.8px;top:1455.7px">25%</div>
<div class="t tx" style="right:468.0px;top:1455.7px">10.7k</div>
<svg class="a" style="left:2997px;top:1457px" width="30" height="30" viewBox="0 0 30 30"><circle cx="15" cy="9" r="7" fill="none" stroke="#3e3446" stroke-width="2.5"/><path d="M2 28V23Q2 19 6 18.5H24Q28 19 28 23V28Z" fill="none" stroke="#3e3446" stroke-width="2.5" stroke-linejoin="round"/></svg>
<div class="a" style="left:3205.4px;top:1450.2px;width:8px;height:40px;background:#444674"></div>
<div class="a" style="left:3221.5px;top:1450.2px;width:8px;height:40px;background:#444674"></div>
<div class="a" style="left:3237.6px;top:1450.2px;width:8px;height:40px;background:#444674"></div>
<div class="a" style="left:3253.7px;top:1450.2px;width:8px;height:40px;background:#444674"></div>
<div class="a" style="left:3269.8px;top:1450.2px;width:8px;height:40px;background:#444674"></div>
<div class="a" style="left:3285.9px;top:1450.2px;width:8px;height:40px;background:#444674"></div>
<div class="a" style="left:3302.0px;top:1450.2px;width:8px;height:40px;background:#444674"></div>
<div class="a" style="left:3318.1px;top:1450.2px;width:8px;height:40px;background:#444674"></div>
<div class="a" style="left:3334.2px;top:1450.2px;width:8px;height:40px;background:#444674"></div>
<div class="a" style="left:3350.3px;top:1450.2px;width:8px;height:40px;background:#444674"></div>
<svg class="a" style="left:547px;top:1537px" width="30" height="28" viewBox="0 0 30 28"><path d="M15 1.5L19 10L28.5 10.8L21.3 17L23.5 26.5L15 21.5L6.5 26.5L8.7 17L1.5 10.8L11 10Z" fill="none" stroke="#e0dce5" stroke-width="2" stroke-linejoin="round"/></svg>
<div class="t lnk" style="left:613.0px;top:1537.5px">MainActivity</div>
<svg class="a" style="left:1081px;top:1537px" width="32" height="32" viewBox="0 0 32 32"><rect width="32" height="32" rx="6" fill="#58a65c"/><path d="M1.8 22 A14 12.2 0 0 1 29.8 22 Z" fill="#fff"/><path d="M7.2 6.8L11.2 12M24.8 6.8L20.8 12" stroke="#fff" stroke-width="2.4" stroke-linecap="round"/><circle cx="9.6" cy="17.6" r="1.4" fill="#58a65c"/><circle cx="22.4" cy="17.6" r="1.4" fill="#58a65c"/></svg>
<div class="t lnk" style="left:1129.4px;top:1537.5px">android</div>
<div class="t tx" style="left:1404.3px;top:1537.5px">ui.load</div>
<div class="t tx" style="right:1465.0px;top:1537.5px"><span style="letter-spacing:1px">0.206/mi</span>n</div>
<div class="t tx" style="right:1110.0px;top:1537.5px">100%</div>
<div class="t tx" style="right:723.8px;top:1537.5px">0%</div>
<div class="t tx" style="right:468.0px;top:1537.5px">8.8k</div>
<svg class="a" style="left:2997px;top:1539px" width="30" height="30" viewBox="0 0 30 30"><circle cx="15" cy="9" r="7" fill="none" stroke="#3e3446" stroke-width="2.5"/><path d="M2 28V23Q2 19 6 18.5H24Q28 19 28 23V28Z" fill="none" stroke="#3e3446" stroke-width="2.5" stroke-linejoin="round"/></svg>
<div class="a" style="left:3205.4px;top:1532.0px;width:8px;height:40px;background:#e0dce5"></div>
<div class="a" style="left:3221.5px;top:1532.0px;width:8px;height:40px;background:#e0dce5"></div>
<div class="a" style="left:3237.6px;top:1532.0px;width:8px;height:40px;background:#e0dce5"></div>
<div class="a" style="left:3253.7px;top:1532.0px;width:8px;height:40px;background:#e0dce5"></div>
<div class="a" style="left:3269.8px;top:1532.0px;width:8px;height:40px;background:#e0dce5"></div>
<div class="a" style="left:3285.9px;top:1532.0px;width:8px;height:40px;background:#e0dce5"></div>
<div class="a" style="left:3302.0px;top:1532.0px;width:8px;height:40px;background:#e0dce5"></div>
<div class="a" style="left:3318.1px;top:1532.0px;width:8px;height:40px;background:#e0dce5"></div>
<div class="a" style="left:3334.2px;top:1532.0px;width:8px;height:40px;background:#e0dce5"></div>
<div class="a" style="left:3350.3px;top:1532.0px;width:8px;height:40px;background:#e0dce5"></div>
<svg class="a" style="left:547px;top:1618px" width="30" height="28" viewBox="0 0 30 28"><path d="M15 1.5L19 10L28.5 10.8L21.3 17L23.5 26.5L15 21.5L6.5 26.5L8.7 17L1.5 10.8L11 10Z" fill="none" stroke="#e0dce5" stroke-width="2" stroke-linejoin="round"/></svg>
<div class="t lnk" style="left:613.0px;top:1619.2px">checkout [android]</div>
<svg class="a" style="left:1081px;top:1618px" width="32" height="32" viewBox="0 0 32 32"><rect width="32" height="32" rx="6" fill="#58a65c"/><path d="M1.8 22 A14 12.2 0 0 1 29.8 22 Z" fill="#fff"/><path d="M7.2 6.8L11.2 12M24.8 6.8L20.8 12" stroke="#fff" stroke-width="2.4" stroke-linecap="round"/><circle cx="9.6" cy="17.6" r="1.4" fill="#58a65c"/><circle cx="22.4" cy="17.6" r="1.4" fill="#58a65c"/></svg>
<div class="t lnk" style="left:1129.4px;top:1619.2px">android</div>
<div class="t tx" style="left:1404.3px;top:1619.2px">http</div>
<div class="t tx" style="right:1465.0px;top:1619.2px"><span style="letter-spacing:1px">0.0386/mi</span>n</div>
<div class="t tx" style="right:1110.0px;top:1619.2px">0%</div>
<div class="t tx" style="right:723.8px;top:1619.2px">0%</div>
<div class="t tx" style="right:468.0px;top:1619.2px">1.6k</div>
<svg class="a" style="left:2997px;top:1620px" width="30" height="30" viewBox="0 0 30 30"><circle cx="15" cy="9" r="7" fill="none" stroke="#3e3446" stroke-width="2.5"/><path d="M2 28V23Q2 19 6 18.5H24Q28 19 28 23V28Z" fill="none" stroke="#3e3446" stroke-width="2.5" stroke-linejoin="round"/></svg>
<div class="a" style="left:3205.4px;top:1613.7px;width:8px;height:40px;background:#444674"></div>
<div class="a" style="left:3221.5px;top:1613.7px;width:8px;height:40px;background:#e0dce5"></div>
<div class="a" style="left:3237.6px;top:1613.7px;width:8px;height:40px;background:#e0dce5"></div>
<div class="a" style="left:3253.7px;top:1613.7px;width:8px;height:40px;background:#e0dce5"></div>
<div class="a" style="left:3269.8px;top:1613.7px;width:8px;height:40px;background:#e0dce5"></div>
<div class="a" style="left:3285.9px;top:1613.7px;width:8px;height:40px;background:#e0dce5"></div>
<div class="a" style="left:3302.0px;top:1613.7px;width:8px;height:40px;background:#e0dce5"></div>
<div class="a" style="left:3318.1px;top:1613.7px;width:8px;height:40px;background:#e0dce5"></div>
<div class="a" style="left:3334.2px;top:1613.7px;width:8px;height:40px;background:#e0dce5"></div>
<div class="a" style="left:3350.3px;top:1613.7px;width:8px;height:40px;background:#e0dce5"></div>

<!-- PAGINATION -->
<div class="a" style="left:3238px;top:1717px;width:157px;height:64px;border:2px solid #e4e0e8;border-radius:12px;background:#fff"></div>
<div class="a" style="left:3316px;top:1718px;width:2px;height:62px;background:#e4e0e8"></div>
<svg class="a" style="left:3271px;top:1737px" width="14" height="24" viewBox="0 0 14 24"><path d="M13 1L2 12L13 23" fill="none" stroke="#a69db2" stroke-width="2.8" stroke-linejoin="miter"/></svg>
<svg class="a" style="left:3349px;top:1737px" width="14" height="24" viewBox="0 0 14 24"><path d="M1 1L12 12L1 23" fill="none" stroke="#a69db2" stroke-width="2.8" stroke-linejoin="miter"/></svg>

<!-- FOOTER -->
<div class="a" style="left:440px;top:1846px;width:3008px;height:108px;background:#faf9fb;border-top:2px solid #e0dce5"></div>
<div class="t sub" style="left:501px;top:1888px;font-size:29px">Privacy Policy</div>
<div class="t sub" style="left:713px;top:1888px;font-size:29px">Terms of Use</div>
<svg class="a" style="left:1923px;top:1882px" width="49" height="43" viewBox="0 0 50 44"><path fill="#80708f" d="M29,2.26a4.67,4.67,0,0,0-8,0L14.420,13.53A32.21,32.21,0,0,1,32.17,40.19H27.55A27.68,27.68,0,0,0,12.090,17.47L6,28a15.920,15.920,0,0,1,9.230,12.17H4.620A.760.76,0,0,1,4,39.060l2.940-5a10.740,10.740,0,0,0-3.360-1.900l-2.910,5a4.540,4.540,0,0,0,1.690,6.240A4.660,4.660,0,0,0,4.620,44H19.150a19.400,19.400,0,0,0-8-17.310l2.310-4A23.870,23.870,0,0,1,23.760,44H36.070a35.880,35.880,0,0,0-16.410-31.800l4.670-8a.770.77,0,0,1,1.050-.270c.530.290,20.290,34.770,20.660,35.170a.760.76,0,0,1-.680,1.130H40.600q.090,1.910,0,3.810h4.780A4.590,4.590,0,0,0,50,39.430a4.490,4.490,0,0,0-.620-2.280Z"/></svg>
<div class="t sub" style="left:2861px;top:1888px;font-size:29px">Service Status</div>
<div class="t sub" style="left:3082px;top:1888px;font-size:29px">API</div>
<div class="t sub" style="left:3159px;top:1888px;font-size:29px">Docs</div>
<div class="t sub" style="left:3257px;top:1888px;font-size:29px">Contribute</div>

</body></html>
